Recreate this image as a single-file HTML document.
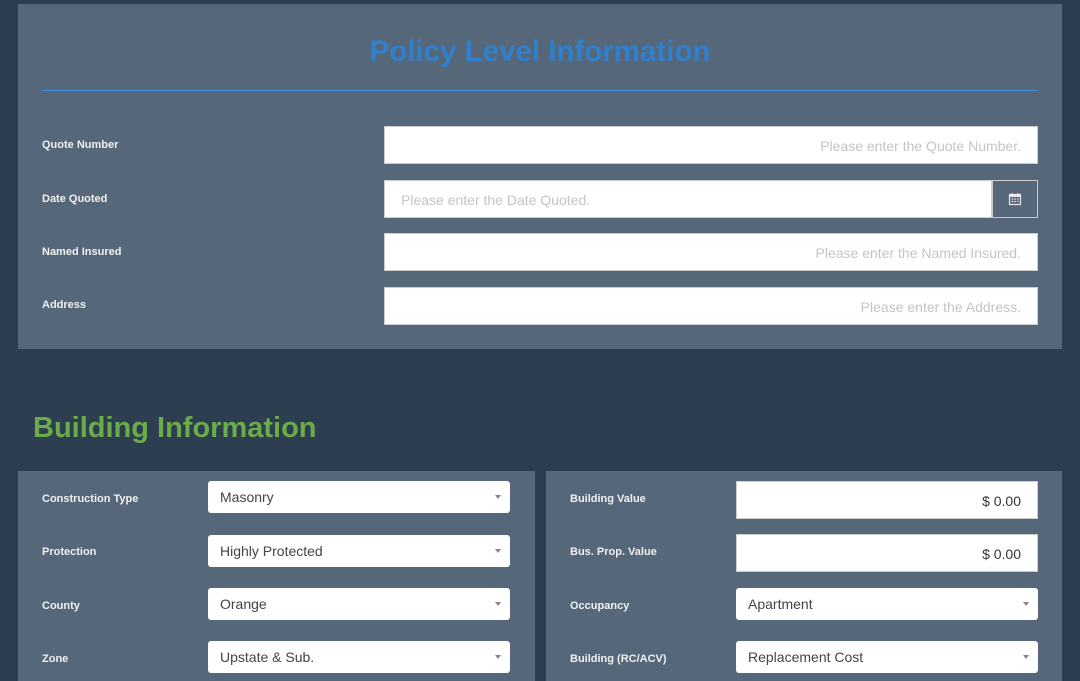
<!DOCTYPE html>
<html><head><style>
*{box-sizing:border-box;margin:0;padding:0}
body{width:1080px;height:675px;overflow:hidden;background:#2c3e50;font-family:"Liberation Sans",sans-serif;position:relative}
.p{position:absolute;background:#566779}
.lbl{position:absolute;color:#f0f0f0;font-size:11px;font-weight:bold}
.in{position:absolute;background:#fff;border:1px solid #ccc;height:38px;font-size:14px;color:#c4c4c4;line-height:38px;padding:0 16px}
.sel{position:absolute;background:#fff;border-radius:3px;height:32px;font-size:14px;color:#444;line-height:33px;padding:0 12px}
.sel:after{content:"";position:absolute;right:9px;top:14px;border-left:3px solid transparent;border-right:3px solid transparent;border-top:4px solid #888}
</style></head><body>
<div class="p" style="left:18px;top:4px;width:1044px;height:345px"></div>
<div style="position:absolute;left:0;width:1080px;top:35px;text-align:center;color:#2f80cf;font-size:29.5px;font-weight:bold">Policy Level Information</div>
<div style="position:absolute;left:42px;top:90px;width:996px;height:1px;background:#3a92e6"></div>
<div class="lbl" style="left:42px;top:139px">Quote Number</div>
<div class="lbl" style="left:42px;top:193px">Date Quoted</div>
<div class="lbl" style="left:42px;top:246px">Named Insured</div>
<div class="lbl" style="left:42px;top:299px">Address</div>
<div class="in" style="left:384px;top:126px;width:654px;text-align:right">Please enter the Quote Number.</div>
<div class="in" style="left:384px;top:180px;width:608px">Please enter the Date Quoted.</div>
<div style="position:absolute;left:992px;top:180px;width:46px;height:38px;border:1px solid #ccc;background:#566779">
<svg width="14" height="14" viewBox="0 0 14 14" style="position:absolute;left:15px;top:11px"><rect x="1.5" y="2.5" width="11" height="10" fill="none" stroke="#e8e8e8" stroke-width="1.2"/><rect x="1" y="2" width="12" height="3" fill="#e8e8e8"/><path d="M4 1v2M10 1v2" stroke="#e8e8e8" stroke-width="1.2"/><path d="M3.5 7h2M6.5 7h1.5M9 7h1.5M3.5 9.5h2M6.5 9.5h1.5M9 9.5h1.5" stroke="#e8e8e8" stroke-width="1.2"/></svg></div>
<div class="in" style="left:384px;top:233px;width:654px;text-align:right">Please enter the Named Insured.</div>
<div class="in" style="left:384px;top:287px;width:654px;text-align:right">Please enter the Address.</div>
<div style="position:absolute;left:33px;top:412px;color:#6aab4a;font-size:29px;font-weight:bold">Building Information</div>
<div class="p" style="left:18px;top:471px;width:517px;height:210px"></div>
<div class="p" style="left:546px;top:471px;width:516px;height:210px"></div>
<div class="lbl" style="left:42px;top:493px">Construction Type</div>
<div class="lbl" style="left:42px;top:546px">Protection</div>
<div class="lbl" style="left:42px;top:600px">County</div>
<div class="lbl" style="left:42px;top:653px">Zone</div>
<div class="sel" style="left:208px;top:481px;width:302px">Masonry</div>
<div class="sel" style="left:208px;top:535px;width:302px">Highly Protected</div>
<div class="sel" style="left:208px;top:588px;width:302px">Orange</div>
<div class="sel" style="left:208px;top:641px;width:302px">Upstate &amp; Sub.</div>
<div class="lbl" style="left:570px;top:493px">Building Value</div>
<div class="lbl" style="left:570px;top:546px">Bus. Prop. Value</div>
<div class="lbl" style="left:570px;top:600px">Occupancy</div>
<div class="lbl" style="left:570px;top:653px">Building (RC/ACV)</div>
<div class="in" style="left:736px;top:481px;width:302px;text-align:right;color:#333">$ 0.00</div>
<div class="in" style="left:736px;top:534px;width:302px;text-align:right;color:#333">$ 0.00</div>
<div class="sel" style="left:736px;top:588px;width:302px">Apartment</div>
<div class="sel" style="left:736px;top:641px;width:302px">Replacement Cost</div>
</body></html>
